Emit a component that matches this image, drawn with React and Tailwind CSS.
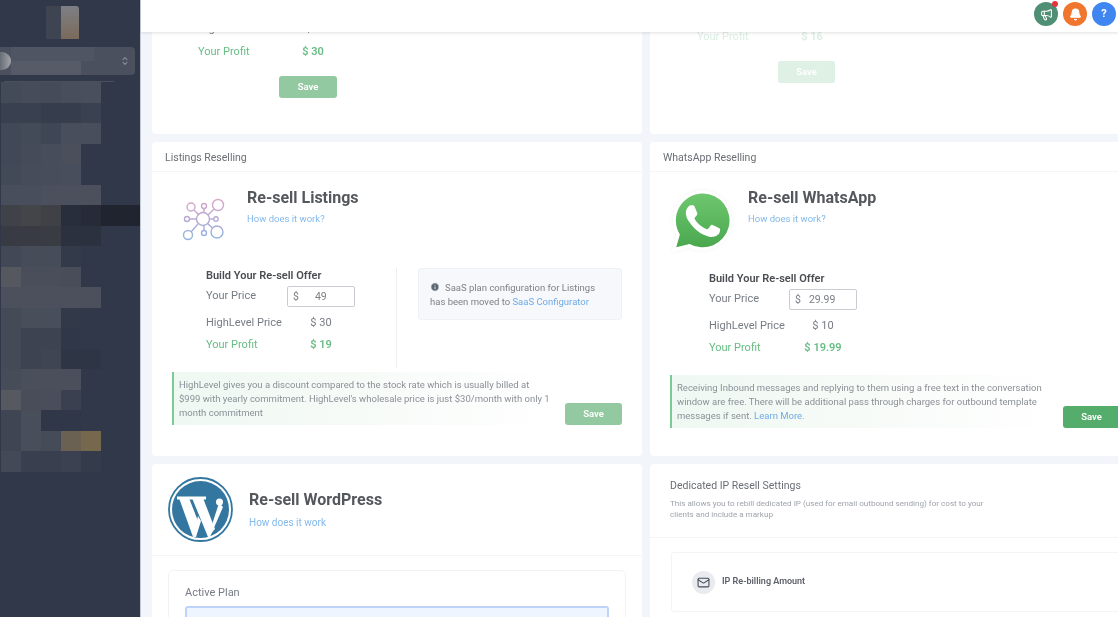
import React from "react";
import { ChevronsUpDown, Mail, Megaphone, Bell, Info } from "lucide-react";

const mosaic = [
  ["bg-[#434a58]", "bg-[#464c5a]", "bg-[#454b59]", "bg-[#484e5b]", "bg-[#494f5c]"],
  ["bg-[#394050]", "bg-[#394050]", "bg-[#363d4d]", "bg-[#363d4d]", "bg-[#3a4150]"],
  ["bg-[#414857]", "bg-[#434a58]", "bg-[#3f4655]", "bg-[#484e5b]", "bg-[#484e5b]"],
  ["bg-[#414857]", "bg-[#454b59]", "bg-[#474d5a]", "bg-[#4a4f5b]"],
  ["bg-[#424957]", "bg-[#464c59]", "bg-[#474d5a]", "bg-[#484e5b]"],
  ["bg-[#484e5c]", "bg-[#484e5c]", "bg-[#4b505c]", "bg-[#4b505c]", "bg-[#4b505c]"],
  ["bg-[#404249]", "bg-[#444548]", "bg-[#404146]", "bg-[#292e3c]", "bg-[#262b37]"],
  ["bg-[#383b44]", "bg-[#383b44]", "bg-[#3a3c43]", "bg-[#2c3140]", "bg-[#2c3140]"],
  ["bg-[#424856]", "bg-[#474c59]", "bg-[#474c59]", "bg-[#333a4a]"],
  ["bg-[#55585f]", "bg-[#494e5a]", "bg-[#494e5a]", "bg-[#484d59]"],
  ["bg-[#4c505c]", "bg-[#4c505c]", "bg-[#4c505c]", "bg-[#4b505c]", "bg-[#4b505c]"],
  ["bg-[#454a57]", "bg-[#484e5a]", "bg-[#484e5a]", "bg-[#323949]"],
  ["bg-[#454a57]", "bg-[#3e4351]", "bg-[#3e4351]", "bg-[#2f3748]"],
  ["bg-[#454a57]", "bg-[#3e4351]", "bg-[#404552]", "bg-[#2e3646]", "bg-[#2e3646]"],
  ["bg-[#474c59]", "bg-[#4a4f5b]", "bg-[#4a4f5b]", "bg-[#4a4f5b]"],
  ["bg-[#56595f]", "bg-[#484d59]", "bg-[#494e5a]", "bg-[#3a4050]"],
  ["bg-[#3f4553]", "bg-[#484e5a]", "bg-[#2f3748]", "bg-[#2f3748]"],
  ["bg-[#3f4553]", "bg-[#484e5a]", "bg-[#464b58]", "bg-[#6a6152]", "bg-[#76684c]"],
  ["bg-[#434957]", "bg-[#393f4e]", "bg-[#393f4e]", "bg-[#3b4150]", "bg-[#343b4b]"],
];

function Sidebar() {
  return (
    <aside className="w-[141px] shrink-0 h-full bg-[#303849] border-r border-r-[#c3cad4] overflow-hidden">
      <div className="flex pl-[46px] pt-[6px]">
        <div className="w-[15px] h-[33px] bg-[#3e4452]" />
        <div className="w-[18px] h-[33px] rounded-tr-[3px] bg-gradient-to-b from-[#7d7f85] to-[#7b6a5a]" />
      </div>
      <div className="mt-[8px] w-[135px] h-[28px] rounded-r-[4px] bg-[#4b505e] flex items-center">
        <div className="w-[11px] h-[18px] rounded-r-full bg-gradient-to-r from-[#686c76] to-[#a3a5aa]" />
        <div className="flex flex-col">
          <div className="w-[83px] h-[14px] bg-[#4f5562]" />
          <div className="w-[70px] h-[14px] bg-[#565b67]" />
        </div>
        <ChevronsUpDown className="ml-auto mr-[5px] w-[10px] h-[14px] text-[#8f939b]" strokeWidth={2.5} />
      </div>
      <div className="mt-[6px] ml-[4px] w-[110px] h-px bg-[#4a505d]" />
      <div className="pl-px">
        {mosaic.map((row, i) => (
          <div key={i} className="flex h-[20.5px]">
            {row.map((c, j) => (
              <div key={j} className={`w-[20px] h-full ${c}`} />
            ))}
            {i === 6 && <div className="w-[39px] h-full bg-[#20242f]" />}
          </div>
        ))}
      </div>
    </aside>
  );
}

function TopBar() {
  return (
    <header className="relative z-10 h-[32px] shrink-0 bg-white shadow-[0_1px_3px_rgba(0,0,0,0.12)] flex items-start justify-end gap-[5px] pt-[2px] pr-[2px]">
      <div className="relative w-[24px] h-[24px] rounded-full bg-[#4f8f73] flex items-center justify-center">
        <Megaphone className="w-[13px] h-[13px] text-white" />
        <span className="absolute -top-[1px] right-0 w-[6px] h-[6px] rounded-full bg-[#e5343a]" />
      </div>
      <div className="w-[24px] h-[24px] rounded-full bg-[#f0762e] flex items-center justify-center">
        <Bell className="w-[13px] h-[13px] text-white" fill="white" />
      </div>
      <div className="w-[24px] h-[24px] rounded-full bg-[#3f86f0] flex items-center justify-center text-white text-[11px] font-bold">
        ?
      </div>
    </header>
  );
}

function ListingsIcon() {
  return (
    <svg width="46" height="46" viewBox="181 196 46 46" fill="none">
      <defs>
        <linearGradient id="lg" gradientUnits="userSpaceOnUse" x1="203" y1="198" x2="203" y2="241">
          <stop offset="0" stopColor="#dba6c6" />
          <stop offset="0.5" stopColor="#b8aad4" />
          <stop offset="1" stopColor="#8db6e0" />
        </linearGradient>
      </defs>
      <g stroke="url(#lg)" strokeWidth="1.4">
        <circle cx="203" cy="219" r="6.5" />
        <circle cx="191" cy="207" r="4" />
        <circle cx="204" cy="206" r="2.5" />
        <circle cx="218" cy="205" r="5.5" />
        <circle cx="187" cy="219" r="2.5" />
        <circle cx="216" cy="219" r="2.2" />
        <circle cx="188" cy="235" r="4.5" />
        <circle cx="204" cy="233" r="2.5" />
        <circle cx="217" cy="232" r="6" />
        <path d="M194 210l5 5M204 208.500v4M214 209l-6 6M189.500 219h7M209.500 219h4M191 232l7-8M204 230.500v-5M212.500 228l-5-4.500" />
      </g>
    </svg>
  );
}

function WhatsAppIcon() {
  return (
    <svg width="68" height="68" viewBox="0 0 24 24" className="drop-shadow-[0_0_2px_rgba(0,0,0,0.05)]">
      <defs>
        <linearGradient id="wa" x1="0" y1="0" x2="0" y2="1">
          <stop offset="0" stopColor="#6ec76f" />
          <stop offset="1" stopColor="#4aa84f" />
        </linearGradient>
      </defs>
      <path d="M12.300 1.200a10.600 10.600 0 0 0-9.200 15.900L1.200 23l6.200-1.600A10.600 10.600 0 1 0 12.300 1.200z" fill="#fff" />
      <path d="M12.300 2.300a9.500 9.500 0 0 0-8.100 14.500L2.900 21.300l4.700-1.200A9.500 9.500 0 1 0 12.300 2.300z" fill="url(#wa)" />
      <path
        transform="translate(0.300 0)"
        fill="#fff"
        d="M17.472 14.382c-.297-.149-1.758-.867-2.03-.967-.273-.099-.471-.148-.67.15-.197.297-.767.966-.94 1.164-.173.199-.347.223-.644.075-.297-.15-1.255-.463-2.39-1.475-.883-.788-1.48-1.761-1.653-2.059-.173-.297-.018-.458.13-.606.134-.133.298-.347.446-.52.149-.174.198-.298.298-.497.099-.198.05-.371-.025-.52-.075-.149-.669-1.612-.916-2.207-.242-.579-.487-.5-.669-.51-.173-.008-.371-.01-.57-.01-.198 0-.52.074-.792.372-.272.297-1.04 1.016-1.04 2.479 0 1.462 1.065 2.875 1.213 3.074.149.198 2.096 3.2 5.077 4.487.709.306 1.262.489 1.694.625.712.227 1.36.195 1.871.118.571-.085 1.758-.719 2.006-1.413.248-.694.248-1.289.173-1.413-.074-.124-.272-.198-.57-.347z"
      />
    </svg>
  );
}

function WordPressLogo() {
  return (
    <svg width="65" height="65" viewBox="8 6 65 65">
      <circle cx="40.500" cy="38.500" r="31.500" fill="none" stroke="#33769f" strokeWidth="1.800" />
      <circle cx="40.500" cy="38.500" r="28.500" fill="#33769f" />
      <g fill="#fff">
        <polygon points="19,27 29,27 38,50 33,66" />
        <polygon points="33,66 36,66 41,50 38,45" />
        <polygon points="32,27 43,27 55,58 48,66" />
        <polygon points="48,66 50,66 63,36 59,32" />
        <rect x="17" y="25.500" width="13" height="3" />
        <rect x="30" y="25.500" width="16" height="3" />
        <circle cx="59.500" cy="31" r="3.500" />
      </g>
    </svg>
  );
}

function Offer({ labelW, price, priceGap, base, profit }) {
  return (
    <div>
      <div className="pt-[1px] text-[11px] leading-[14px] font-semibold text-[#4a4d52]">Build Your Re-sell Offer</div>
      <div className="flex items-start mt-[3px] h-[21px]">
        <div className={`${labelW} text-[11px] leading-[14px] pt-[3px] text-[#777c84]`}>Your Price</div>
        <div className="w-[68px] h-[21px] border border-[#c9ccd1] rounded-[2px] bg-white flex items-center pl-[5px] text-[10.500px] text-[#7b8087]">
          <span>$</span>
          <span className={priceGap}>{price}</span>
        </div>
      </div>
      <div className="flex mt-[9px] text-[11px] leading-[14px] text-[#777c84]">
        <div className={labelW}>HighLevel Price</div>
        <div className="w-[68px] text-center">{base}</div>
      </div>
      <div className="flex mt-[8px] text-[11px] leading-[14px] text-[#68bd85]">
        <div className={labelW}>Your Profit</div>
        <div className="w-[68px] text-center font-semibold whitespace-nowrap">{profit}</div>
      </div>
    </div>
  );
}

function Note({ children, save }) {
  return (
    <div className="mx-[20px] flex items-end">
      <div className="flex-1 h-[53px] border-l-2 border-l-[#7ccb95] bg-gradient-to-r from-[#eff8f2] via-[#f7fbf8] to-white pl-[5px] pt-[6px] text-[9.500px] leading-[14px] text-[#8b9097] whitespace-nowrap">
        {children}
      </div>
      <button className={`w-[57px] h-[22px] rounded-[3px] text-white text-[9.500px] font-semibold ${save}`}>Save</button>
    </div>
  );
}

function CardHeader({ children }) {
  return (
    <div className="h-[30px] px-[13px] pt-[2px] flex items-center border-b border-b-[#f3f5f8] text-[10.500px] text-[#6a6e75]">{children}</div>
  );
}

function TitleBlock({ title, link, linkClass = "mt-[4px] text-[9.500px]" }) {
  return (
    <div className="pt-[1px]">
      <div className="text-[16px] leading-[20px] font-bold text-[#54575c] whitespace-nowrap">{title}</div>
      <div className={`leading-[14px] text-[#83b9ec] ${linkClass}`}>{link}</div>
    </div>
  );
}

function Card({ className = "", children }) {
  return <section className={`bg-white rounded-[4px] overflow-hidden ${className}`}>{children}</section>;
}

export default function App() {
  return (
    <div className="w-[1118px] h-[617px] overflow-hidden bg-[linear-gradient(to_right,#303849_141px,#f2f6fa_141px)]">
      <div className="flex w-full h-full overflow-hidden bg-[#f2f6fa] font-['Roboto',sans-serif] blur-[0.6px]">
        <Sidebar />
        <div className="flex-1 min-w-0 flex flex-col h-full">
          <TopBar />
          <main className="-mt-[32px] pl-[11px] grid grid-cols-[490px_490px] gap-x-[8px] gap-y-[8px] content-start">
            {/* first row */}
            <Card className="h-[134px] pl-[46px] pt-[22px]">
              <div className="flex text-[11px] leading-[14px] text-[#777c84]">
                <div className="w-[92px]">HighLevel Price</div>
                <div className="w-[46px] text-center">$ 0</div>
              </div>
              <div className="flex mt-[9px] text-[11px] leading-[14px] text-[#68bd85]">
                <div className="w-[92px]">Your Profit</div>
                <div className="w-[46px] text-center font-semibold">$ 30</div>
              </div>
              <button className="block ml-[81px] mt-[17px] w-[58px] h-[22px] rounded-[3px] bg-[#92c9a0] text-white text-[9.500px] font-semibold">Save</button>
            </Card>
            <Card className="h-[134px] pl-[47px] pt-[30px]">
              <div className="flex text-[11px] leading-[14px] text-[#dcefe3]">
                <div className="w-[92px]">Your Profit</div>
                <div className="w-[46px] text-center font-semibold">$ 16</div>
              </div>
              <button className="block ml-[81px] mt-[17px] w-[57px] h-[22px] rounded-[3px] bg-[#dff0e4] text-white text-[9.500px] font-semibold">Save</button>
            </Card>

            {/* Listings */}
            <Card className="h-[314px]">
              <CardHeader>Listings Reselling</CardHeader>
              <div className="flex h-[81px] mt-[15px]">
                <div className="ml-[29px] w-[66px] pt-[9px]">
                  <ListingsIcon />
                </div>
                <TitleBlock title="Re-sell Listings" link="How does it work?" />
              </div>
              <div className="flex">
                <div className="w-[245px] h-[100px] pl-[54px] border-r border-r-[#eceef1]">
                  <Offer labelW="w-[81px]" price="49" priceGap="ml-[16px]" base="$ 30" profit="$ 19" />
                </div>
                <div className="ml-[21px] w-[204px] h-[52px] rounded-[3px] border border-[#eef1f5] bg-[#f6f8fb] pl-[11px] pt-[12px] text-[9.500px] leading-[14px] text-[#7d8289] whitespace-nowrap">
                  <Info className="inline-block w-[10px] h-[10px] mr-[5px] align-[-1px] text-white fill-[#5c6672]" />
                  SaaS plan configuration for Listings
                  <br />
                  has been moved to <span className="text-[#6fabe4]">SaaS Configurator</span>
                </div>
              </div>
              <div className="mt-[4px]">
                <Note save="bg-[#92c9a0]">
                  HighLevel gives you a discount compared to the stock rate which is usually billed at
                  <br />
                  $999 with yearly commitment. HighLevel's wholesale price is just $30/month with only 1
                  <br />
                  month commitment
                </Note>
              </div>
            </Card>

            {/* WhatsApp */}
            <Card className="h-[314px]">
              <CardHeader>WhatsApp Reselling</CardHeader>
              <div className="flex h-[84px] mt-[15px]">
                <div className="ml-[18px] w-[80px]">
                  <WhatsAppIcon />
                </div>
                <TitleBlock title="Re-sell WhatsApp" link="How does it work?" />
              </div>
              <div className="h-[100px] pl-[59px]">
                <Offer labelW="w-[80px]" price="29.99" priceGap="ml-[8px]" base="$ 10" profit="$ 19.99" />
              </div>
              <div className="mt-[4px]">
                <Note save="bg-[#55ad6c]">
                  Receiving Inbound messages and replying to them using a free text in the conversation
                  <br />
                  window are free. There will be additional pass through charges for outbound template
                  <br />
                  messages if sent. <span className="text-[#6fabe4]">Learn More.</span>
                </Note>
              </div>
            </Card>

            {/* WordPress */}
            <Card className="h-[300px]">
              <div className="h-[92px] border-b border-b-[#f3f5f8] flex pl-[16px] pt-[13px]">
                <WordPressLogo />
                <div className="ml-[16px] pt-[12px]">
                  <TitleBlock title="Re-sell WordPress" link="How does it work" linkClass="mt-[6px] text-[10px]" />
                </div>
              </div>
              <div className="mx-[16px] mt-[14px] h-[200px] rounded-[5px] border border-[#f0f2f5] px-[16px] pt-[15px]">
                <div className="text-[11px] leading-[14px] text-[#777c84]">Active Plan</div>
                <div className="mt-[6px] h-[40px] rounded-[3px] border-2 border-[#bfd2f7] bg-[#eff5fe]" />
              </div>
            </Card>

            {/* Dedicated IP */}
            <Card className="h-[300px]">
              <div className="h-[74px] border-b border-b-[#f3f5f8] pl-[20px] pt-[15px]">
                <div className="text-[10.500px] leading-[14px] text-[#6a6e75]">Dedicated IP Resell Settings</div>
                <div className="mt-[5px] text-[8.100px] leading-[11px] text-[#9fa4ab] whitespace-nowrap">
                  This allows you to rebill dedicated IP (used for email outbound sending) for cost to your
                  <br />
                  clients and include a markup
                </div>
              </div>
              <div className="ml-[21px] mt-[14px] h-[60px] border border-[#f2f4f7] rounded-[3px] flex items-center pl-[20px]">
                <div className="w-[23px] h-[23px] rounded-full bg-[#e9ebef] flex items-center justify-center">
                  <Mail className="w-[13px] h-[13px] text-[#454b59]" strokeWidth={2} />
                </div>
                <div className="ml-[7px] text-[9px] font-semibold text-[#5b5f68]">IP Re-billing Amount</div>
              </div>
            </Card>
          </main>
        </div>
      </div>
    </div>
  );
}
